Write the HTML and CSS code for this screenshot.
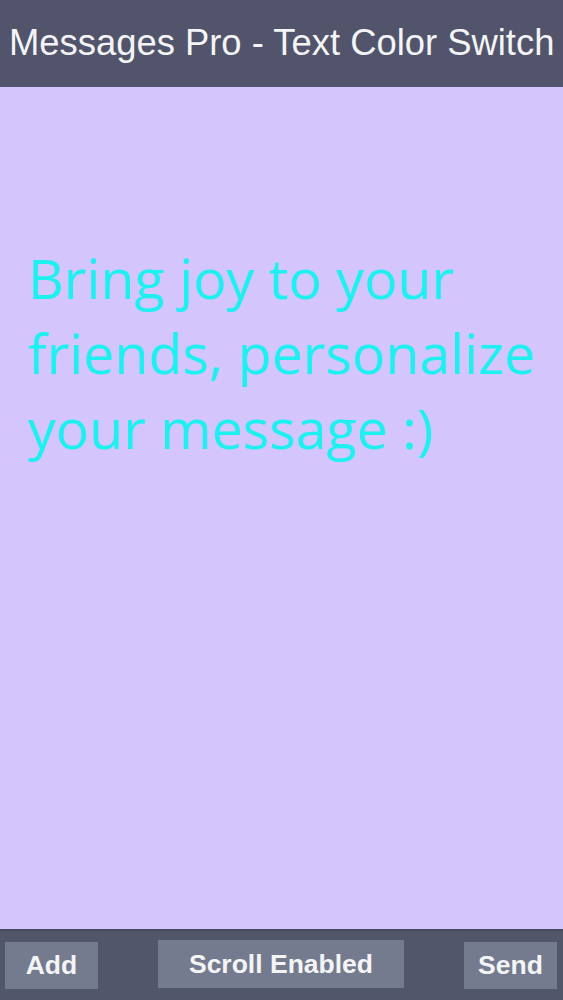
FILE: index.html
```html
<!DOCTYPE html>
<html lang="en">
<head>
<meta charset="utf-8">
<title>Messages Pro - Text Color Switch</title>
<link rel="stylesheet" href="styles.css">
</head>
<body>
<div class="app">
  <header class="topbar">
    <h1 class="title">Messages Pro - Text Color Switch</h1>
  </header>
  <main class="canvas">
    <p class="message">Bring joy to your<br>friends, personalize<br>your message :)</p>
  </main>
  <footer class="toolbar">
    <button class="btn btn-side">Add</button>
    <button class="btn btn-center">Scroll Enabled</button>
    <button class="btn btn-side">Send</button>
  </footer>
</div>
</body>
</html>
```
FILE: styles.css
```css
html, body {
  margin: 0;
  padding: 0;
}
body {
  background: #d4c6fc;
  font-family: "Liberation Sans", Arial, sans-serif;
}
.app {
  width: 563px;
  height: 1000px;
  display: flex;
  flex-direction: column;
  overflow: hidden;
}
.topbar {
  height: 87px;
  flex: none;
  background: #51546a;
  box-sizing: border-box;
  padding-left: 9px;
}
.title {
  margin: 0;
  font-weight: normal;
  font-size: 36.4px;
  line-height: 40px;
  padding-top: 23px;
  color: #f4f4f6;
  white-space: nowrap;
}
.canvas {
  flex: 1;
  background: #d4c6fc;
  padding: 153px 0 0 28px;
}
.message {
  margin: 0;
  font-family: "Open Sans", "Noto Sans", sans-serif;
  font-size: 55.5px;
  line-height: 75px;
  color: #1cf0f0;
  white-space: nowrap;
}
.toolbar {
  height: 71px;
  flex: none;
  box-sizing: border-box;
  background: #52566b;
  border-top: 2px solid #484b60;
  display: flex;
  justify-content: space-between;
  align-items: flex-start;
  padding: 0 6px 0 5px;
}
.btn {
  border: none;
  margin: 0;
  padding: 0;
  background: #747b8e;
  color: #f4f4f6;
  font-family: "Liberation Sans", Arial, sans-serif;
  font-weight: bold;
  font-size: 26.5px;
}
.btn-side {
  width: 93px;
  height: 47px;
  margin-top: 11px;
}
.btn-center {
  width: 246px;
  height: 48px;
  margin-top: 9px;
}
```
